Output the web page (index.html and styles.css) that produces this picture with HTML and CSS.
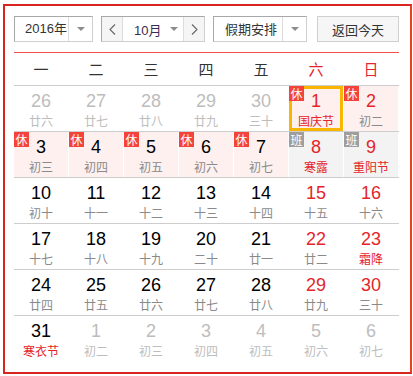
FILE: index.html
```html
<!DOCTYPE html>
<html lang="zh-CN">
<head>
<meta charset="utf-8">
<title>万年历</title>
<link rel="stylesheet" href="styles.css">
</head>
<body>
<div class="cal">
  <div class="controls">
    <div class="select year">
      <span class="sel-text">2016年</span>
      <span class="sel-arrow"><i class="tri"></i></span>
    </div>
    <div class="select month">
      <span class="nav"><svg width="7" height="11" viewBox="0 0 7 11"><polyline points="6,0.5 1,5.5 6,10.5" fill="none" stroke="#666" stroke-width="1.1"/></svg></span>
      <span class="month-text">10月<i class="tri"></i></span>
      <span class="nav next"><svg width="7" height="11" viewBox="0 0 7 11"><polyline points="1,0.5 6,5.5 1,10.5" fill="none" stroke="#666" stroke-width="1.1"/></svg></span>
    </div>
    <div class="select holiday">
      <span class="sel-text">假期安排</span>
      <span class="sel-arrow"><i class="tri"></i></span>
    </div>
    <button class="today">返回今天</button>
  </div>
  <div class="weekdays">
    <span>一</span><span>二</span><span>三</span><span>四</span><span>五</span><span class="wk">六</span><span class="wk">日</span>
  </div>
  <div class="week">
    <div class="day other"><b>26</b><s>廿六</s></div>
    <div class="day other"><b>27</b><s>廿七</s></div>
    <div class="day other"><b>28</b><s>廿八</s></div>
    <div class="day other"><b>29</b><s>廿九</s></div>
    <div class="day other"><b>30</b><s>三十</s></div>
    <div class="day rest sel red"><em class="badge">休</em><b>1</b><s class="fest">国庆节</s></div>
    <div class="day rest red"><em class="badge">休</em><b>2</b><s>初二</s></div>
  </div>
  <div class="week">
    <div class="day rest"><em class="badge">休</em><b>3</b><s>初三</s></div>
    <div class="day rest"><em class="badge">休</em><b>4</b><s>初四</s></div>
    <div class="day rest"><em class="badge">休</em><b>5</b><s>初五</s></div>
    <div class="day rest"><em class="badge">休</em><b>6</b><s>初六</s></div>
    <div class="day rest"><em class="badge">休</em><b>7</b><s>初七</s></div>
    <div class="day work red"><em class="badge">班</em><b>8</b><s class="fest">寒露</s></div>
    <div class="day work red"><em class="badge">班</em><b>9</b><s class="fest">重阳节</s></div>
  </div>
  <div class="week">
    <div class="day"><b>10</b><s>初十</s></div>
    <div class="day"><b>11</b><s>十一</s></div>
    <div class="day"><b>12</b><s>十二</s></div>
    <div class="day"><b>13</b><s>十三</s></div>
    <div class="day"><b>14</b><s>十四</s></div>
    <div class="day red"><b>15</b><s>十五</s></div>
    <div class="day red"><b>16</b><s>十六</s></div>
  </div>
  <div class="week">
    <div class="day"><b>17</b><s>十七</s></div>
    <div class="day"><b>18</b><s>十八</s></div>
    <div class="day"><b>19</b><s>十九</s></div>
    <div class="day"><b>20</b><s>二十</s></div>
    <div class="day"><b>21</b><s>廿一</s></div>
    <div class="day red"><b>22</b><s>廿二</s></div>
    <div class="day red"><b>23</b><s class="fest">霜降</s></div>
  </div>
  <div class="week">
    <div class="day"><b>24</b><s>廿四</s></div>
    <div class="day"><b>25</b><s>廿五</s></div>
    <div class="day"><b>26</b><s>廿六</s></div>
    <div class="day"><b>27</b><s>廿七</s></div>
    <div class="day"><b>28</b><s>廿八</s></div>
    <div class="day red"><b>29</b><s>廿九</s></div>
    <div class="day red"><b>30</b><s>三十</s></div>
  </div>
  <div class="week last">
    <div class="day"><b>31</b><s class="fest">寒衣节</s></div>
    <div class="day other"><b>1</b><s>初二</s></div>
    <div class="day other"><b>2</b><s>初三</s></div>
    <div class="day other"><b>3</b><s>初四</s></div>
    <div class="day other"><b>4</b><s>初五</s></div>
    <div class="day other"><b>5</b><s>初六</s></div>
    <div class="day other"><b>6</b><s>初七</s></div>
  </div>
</div>
</body>
</html>
```

FILE: styles.css
```css
* { box-sizing: border-box; }
html, body { margin: 0; padding: 0; background: #fff; }
body {
  font-family: "Liberation Sans", "Noto Sans CJK SC", sans-serif;
  color: #333;
}
.cal {
  margin: 4px 0 0 3px;
  width: 409px;
  height: 370px;
  border: 2px solid #d8261e;
  border-right-color: #e8421f;
  padding: 10px 11px 0 9px;
}
.controls {
  display: flex;
  height: 26px;
  font-family: "Noto Sans CJK SC", sans-serif;
  font-size: 13px;
}
.select {
  display: flex;
  height: 26px;
  border: 1px solid;
  border-color: #a8a8a8 #cfcfcf #cfcfcf #a8a8a8;
  background: #fff;
}
.year { width: 79px; margin-right: 8px; }
.month { width: 104px; margin-right: 8px; }
.holiday { width: 94px; margin-right: 10px; }
.sel-text {
  flex: 1;
  line-height: 24px;
  padding-left: 10px;
  color: #333;
}
.year .sel-text { font-family: "Liberation Sans", "Noto Sans CJK SC", sans-serif; }
.holiday .sel-text { padding-left: 11px; }
.sel-arrow {
  width: 24px;
  border-left: 1px solid #dcdcdc;
  display: flex;
  align-items: center;
  justify-content: center;
}
.tri {
  display: inline-block;
  width: 0;
  height: 0;
  border-left: 4px solid transparent;
  border-right: 4px solid transparent;
  border-top: 4px solid #8c8c8c;
}
.nav {
  width: 21px;
  background: #f5f5f5;
  display: flex;
  align-items: center;
  justify-content: center;
  border-right: 1px solid #dcdcdc;
}
.nav.next { border-right: 0; border-left: 1px solid #dcdcdc; }
.month-text {
  flex: 1;
  display: flex;
  align-items: center;
  padding-left: 11px;
  gap: 9px;
  font-family: "Liberation Sans", "Noto Sans CJK SC", sans-serif;
  color: #3a2a55;
}
.today {
  width: 82px;
  height: 26px;
  border: 1px solid #cfcfcf;
  background: #f6f6f6;
  font-family: "Noto Sans CJK SC", sans-serif;
  font-size: 13px;
  color: #333;
  padding: 0;
}
.weekdays {
  margin-top: 10px;
  border-top: 1px solid #f5504a;
  border-bottom: 1px solid #cdcdcd;
  height: 34px;
  display: grid;
  grid-template-columns: repeat(7, 54px);
  column-gap: 1px;
  align-items: center;
  font-family: "Noto Sans CJK SC", sans-serif;
  font-size: 15px;
  color: #333;
}
.weekdays span { text-align: center; line-height: 32px; }
.weekdays .wk { color: #e4262b; }
.week {
  display: grid;
  grid-template-columns: repeat(7, 54px);
  column-gap: 1px;
  border-bottom: 1px solid #cdcdcd;
  height: 46px;
}
.week.last { border-bottom: 0; }
.day {
  position: relative;
  height: 45px;
  text-align: center;
  padding-top: 4px;
}
.day b {
  display: block;
  font-weight: normal;
  font-family: "Liberation Sans", sans-serif;
  font-size: 18px;
  line-height: 22px;
  color: #000;
}
.day s {
  display: block;
  text-decoration: none;
  font-family: "Noto Sans CJK SC", sans-serif;
  font-size: 12px;
  line-height: 18px;
  color: #8a8a8a;
}
.day.red b { color: #e4262b; }
.day s.fest { color: #e4262b; }
.day.other b, .day.other s { color: #bdbdbd; }
.day.rest { background: #fdf0ef; }
.day.work { background: #f3f3f3; }
.day.sel { box-shadow: inset 0 0 0 3px #f8b602; }
.badge {
  position: absolute;
  top: 0;
  left: 0;
  width: 15px;
  height: 15px;
  font-style: normal;
  font-family: "Noto Sans CJK SC", sans-serif;
  font-size: 12px;
  line-height: 15px;
  text-align: center;
  color: #fff;
  background: #f4433a;
}
.work .badge { background: #9e9e9e; }
```
